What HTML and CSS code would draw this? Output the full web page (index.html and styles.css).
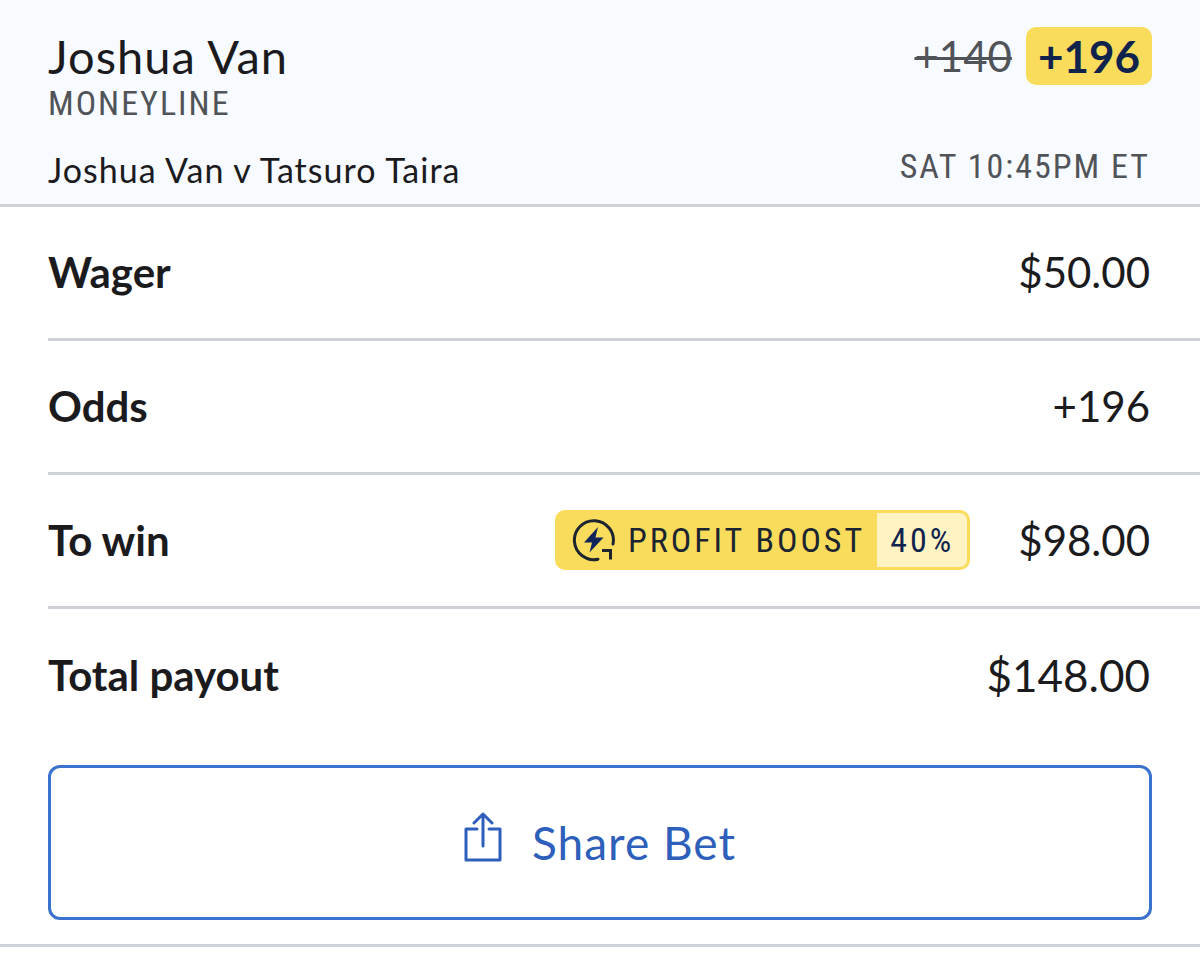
FILE: index.html
```html
<!DOCTYPE html>
<html lang="en">

<head>
    <meta charset="UTF-8">
    <meta name="viewport" content="width=device-width, initial-scale=1.0">
    <title>Bet Receipt</title>
    <link rel="stylesheet" href="styles.css">
</head>

<body>
    <header class="bet-header">
        <div class="selection">
            <h1>Joshua Van</h1>
            <p class="market">MONEYLINE</p>
            <p class="event">Joshua Van v Tatsuro Taira</p>
        </div>
        <div class="price">
            <div class="odds">
                <s>+140</s>
                <strong class="boosted">+196</strong>
            </div>
            <p class="start-time">SAT 10:45PM ET</p>
        </div>
    </header>
    <main>
        <dl class="summary">
            <div class="row">
                <dt>Wager</dt>
                <dd>$50.00</dd>
            </div>
            <div class="row">
                <dt>Odds</dt>
                <dd>+196</dd>
            </div>
            <div class="row">
                <dt>To win</dt>
                <dd>
                    <span class="boost">
                        <span class="boost-name">
                            <svg width="44" height="44" viewBox="0 0 44 44" fill="none" stroke="#1c2430" stroke-width="3">
                                <path d="M26 41.2A19.5 19.5 0 1 1 41 26" stroke-linecap="round" />
                                <path d="M30 32.500H38.500V41.500" />
                                <path d="M26 9L12 24.500H20L17.500 34.500L31.500 19.500H23.500Z" fill="#10245a" stroke="none" />
                            </svg>
                            PROFIT BOOST
                        </span>
                        <span class="boost-value">40%</span>
                    </span>
                    $98.00
                </dd>
            </div>
            <div class="row total">
                <dt>Total payout</dt>
                <dd>$148.00</dd>
            </div>
        </dl>
        <div class="actions">
            <button class="share" type="button">
                <svg width="38" height="50" viewBox="0 0 38 50" fill="none" stroke="#2d5fbb" stroke-width="3" stroke-linecap="round" stroke-linejoin="round">
                    <path d="M13 17H2V48H36V17H25" />
                    <path d="M19 34V2M10 11L19 2L28 11" />
                </svg>
                Share Bet
            </button>
        </div>
    </main>
</body>

</html>
```
FILE: styles.css
```css
* {
    margin: 0;
    padding: 0;
    box-sizing: border-box;
}

body {
    background-color: white;
    color: #1b1b1e;
    font-family: "Lato", sans-serif;
}

.bet-header {
    display: flex;
    justify-content: space-between;
    background-color: #f7faff;
    border-bottom: 3px solid #ced1da;
    padding: 27px 48px 12px;
}

h1 {
    font-size: 47px;
    font-weight: 400;
    line-height: 58px;
    letter-spacing: 1px;
}

.market,
.start-time {
    color: #505357;
    font-family: "Roboto Condensed", "Liberation Sans Narrow", sans-serif;
    font-size: 34px;
    line-height: 36px;
    letter-spacing: 2px;
}

.event {
    font-size: 34px;
    line-height: 44px;
    letter-spacing: 1px;
    margin-top: 27px;
}

.price {
    display: flex;
    flex-direction: column;
    align-items: flex-end;
    justify-content: space-between;
    padding-bottom: 8px;
}

.odds {
    display: flex;
    gap: 14px;
    font-size: 44px;
    line-height: 58px;
}

.odds s {
    color: #505357;
    font-size: 42px;
    text-decoration-thickness: 3px;
}

.boosted {
    background-color: #f9dc5c;
    border-radius: 10px;
    color: #10234d;
    padding: 0 12px;
}

.start-time {
    padding-right: 2px;
}

.row {
    display: flex;
    align-items: center;
    justify-content: space-between;
    height: 134px;
    margin-left: 48px;
    padding: 0 50px 2px 0;
    border-bottom: 3px solid #ced1d8;
    font-size: 42px;
}

dt {
    font-weight: 700;
}

dd {
    display: flex;
    align-items: center;
    gap: 48px;
}

.total {
    border-bottom: none;
}

.total dd {
    font-size: 44px;
}

.boost {
    display: flex;
    border: 3px solid #f9dc5c;
    border-radius: 10px;
    background-color: #f9dc5c;
    color: #1c2430;
    font-family: "Roboto Condensed", "Liberation Sans Narrow", sans-serif;
    font-size: 34px;
    line-height: 54px;
    letter-spacing: 3px;
}

.boost-name {
    display: flex;
    align-items: center;
    gap: 12px;
    padding: 0 12px 0 14px;
}

.boost-value {
    background-color: #fff3c4;
    border-radius: 0 7px 7px 0;
    color: #10234d;
    padding: 0 13px;
}

.actions {
    border-bottom: 3px solid #ced1da;
    padding: 22px 48px 24px;
}

.share {
    display: flex;
    align-items: center;
    justify-content: center;
    gap: 30px;
    width: 100%;
    height: 155px;
    border: 3px solid #3b72cd;
    border-radius: 12px;
    background-color: white;
    color: #2d5fbb;
    font-family: inherit;
    font-size: 46px;
    letter-spacing: 1px;
    cursor: pointer;
}

.share svg {
    margin-bottom: 12px;
}
```
